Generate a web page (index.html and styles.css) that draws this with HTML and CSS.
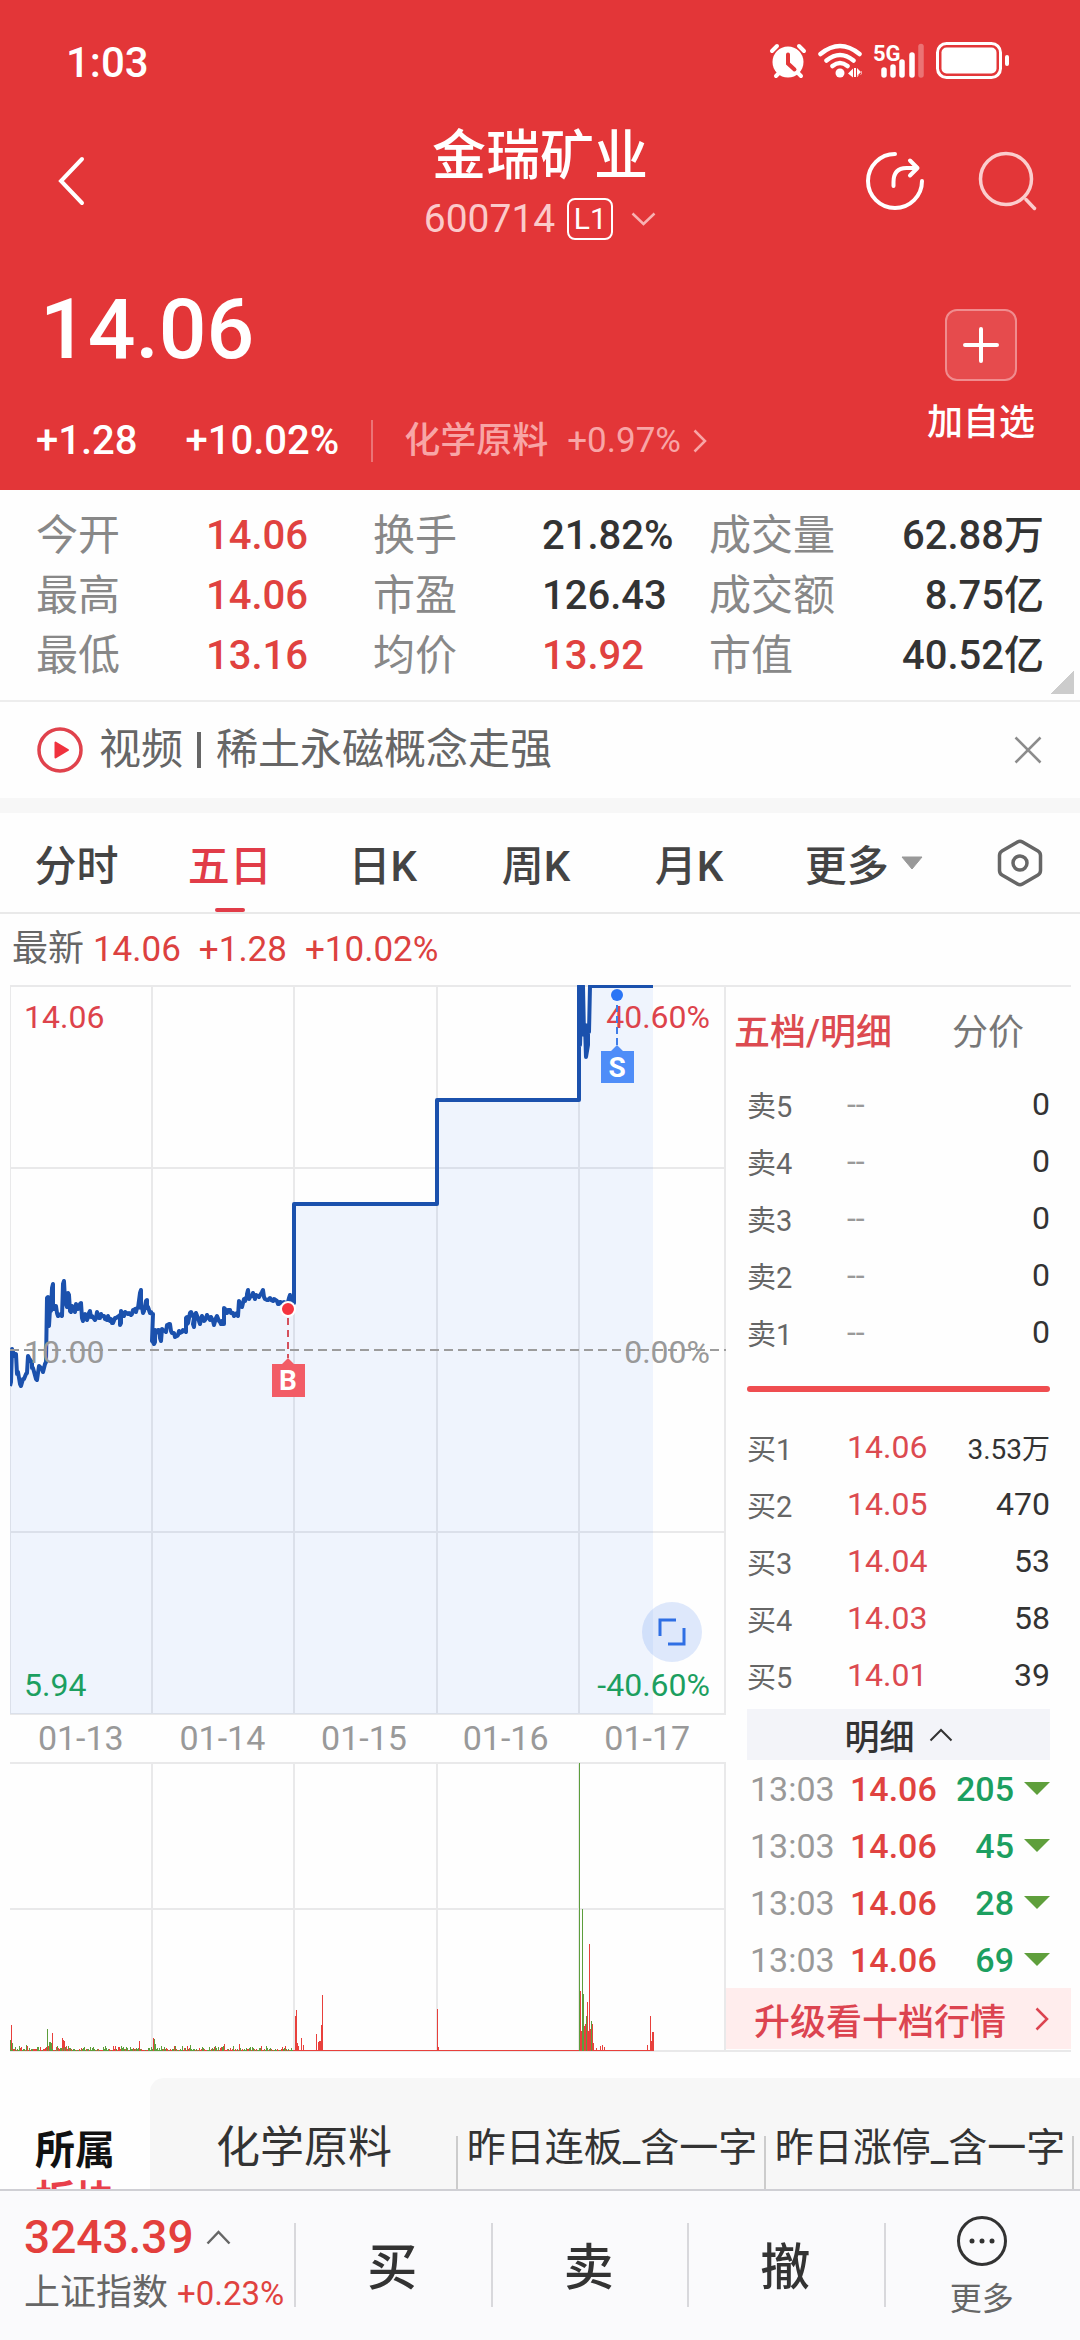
FILE: index.html
```html
<!DOCTYPE html>
<html lang="zh-CN">
<head>
    <meta charset="UTF-8">
    <meta name="viewport" content="width=device-width, initial-scale=1.0">
    <title>金瑞矿业 600714</title>
    <link rel="stylesheet" href="styles.css">
</head>
<body>
    <header class="header">
        <div class="status">
            <span class="clock">1:03</span>
            <svg class="status-icons" width="242" height="40" viewBox="768 42 242 40">
                <!-- alarm -->
                <g fill="none" stroke="#fff" stroke-width="4" stroke-linecap="round">
                    <path d="M772 51l5-5M799 46l5 5M776 76l5-5M801 76l-5-5"/>
                </g>
                <circle cx="788" cy="62" r="15.5" fill="#fff"/>
                <path d="M788 54.500v9l6.500 6" fill="none" stroke="#e33638" stroke-width="4" stroke-linecap="round"/>
                <!-- wifi -->
                <g fill="none" stroke="#fff" stroke-width="4.500" stroke-linecap="round">
                    <path d="M820.500 54q19.500-16 39 0M826.500 60.500q13.500-11 27 0M832.500 66q7.500-6 15 0"/>
                </g>
                <circle cx="840" cy="73" r="4.500" fill="#fff"/>
                <path d="M848 73.500l5-5v9zM857 68v9l5-4zM854 68h2v9h-2zM857 76l5-5v3z" fill="#fff"/>
                <!-- signal -->
                <text class="net" x="873" y="61">5G</text>
                <g stroke="#fff" stroke-width="5.500" stroke-linecap="round">
                    <path d="M884 70v5M893 67v8M902 62v13M912 55v20"/>
                    <path d="M921 46.500v28.500" opacity=".3"/>
                </g>
                <!-- battery -->
                <rect x="937.500" y="43.500" width="63" height="34" rx="9" fill="none" stroke="#fff" stroke-width="3"/>
                <rect x="941.500" y="47.500" width="55" height="26" rx="5" fill="#fff"/>
                <path d="M1007 57v7" stroke="#fff" stroke-width="4" stroke-linecap="round"/>
            </svg>
        </div>
        <nav class="nav">
            <button class="icon-btn back" aria-label="返回">
                <svg width="28" height="50" viewBox="0 0 28 50"><path d="M25 3L4 25l21 22" fill="none" stroke="#fff" stroke-width="4" stroke-linecap="round"/></svg>
            </button>
            <div class="title">
                <h1>金瑞矿业</h1>
                <button class="code">600714<span class="level">L1</span>
                    <svg width="25" height="14" viewBox="0 0 25 14"><path d="M1.500 1.500l11 10.500 11-10.500" fill="none" stroke="#f8b2b2" stroke-width="2.500"/></svg>
                </button>
            </div>
            <div class="actions">
                <button class="icon-btn" aria-label="分享">
                    <svg width="60" height="60" viewBox="0 0 60 60" fill="none" stroke="#fff" stroke-width="4" stroke-linecap="round" stroke-linejoin="round"><path d="M30 3a27 27 0 1 0 27 27M28.500 35v-4q0-14 13-14h11M45 9.500l7.500 7.500-7.500 7.500"/></svg>
                </button>
                <button class="icon-btn" aria-label="搜索">
                    <svg width="60" height="60" viewBox="0 0 60 60" fill="none" stroke="#fbcdcd" stroke-width="3.500" stroke-linecap="round"><circle cx="28" cy="28" r="25.500"/><path d="M48 48.500l8.500 9"/></svg>
                </button>
            </div>
        </nav>
        <section class="quote">
            <div>
                <div class="price">14.06</div>
                <div class="change">
                    <span class="diff">+1.28</span>
                    <span class="pct">+10.02%</span>
                    <a class="sector" href="#">化学原料 <span>+0.97%</span>
                        <svg width="14" height="24" viewBox="0 0 14 24"><path d="M1.500 1.500L12 12 1.500 22.500" fill="none" stroke="#f8a5a6" stroke-width="2.500"/></svg>
                    </a>
                </div>
            </div>
            <button class="add">
                <span class="add-box"><svg width="36" height="36" viewBox="0 0 36 36"><path d="M18 2v32M2 18h32" stroke="#fff" stroke-width="4" stroke-linecap="round"/></svg></span>
                加自选
            </button>
        </section>
    </header>

    <main class="main">
        <dl class="stats">
            <dt>今开</dt><dd class="up">14.06</dd>
            <dt>换手</dt><dd>21.82%</dd>
            <dt>成交量</dt><dd class="end">62.88万</dd>
            <dt>最高</dt><dd class="up">14.06</dd>
            <dt>市盈</dt><dd>126.43</dd>
            <dt>成交额</dt><dd class="end">8.75亿</dd>
            <dt>最低</dt><dd class="up">13.16</dd>
            <dt>均价</dt><dd class="up">13.92</dd>
            <dt>市值</dt><dd class="end">40.52亿</dd>
        </dl>

        <div class="news">
            <svg width="46" height="46" viewBox="0 0 46 46"><circle cx="23" cy="23" r="21" fill="none" stroke="#e0424c" stroke-width="3.500"/><path d="M18.500 15.500v15L31 23z" fill="#f0323e" stroke="#f0323e" stroke-width="2" stroke-linejoin="round"/></svg>
            <a class="news-link" href="#"><span>视频</span><i class="bar"></i><span>稀土永磁概念走强</span></a>
            <button class="icon-btn" aria-label="关闭">
                <svg width="28" height="28" viewBox="0 0 28 28"><path d="M1.500 1.500l25 25M26.500 1.500l-25 25" stroke="#8c8c8c" stroke-width="2.500"/></svg>
            </button>
        </div>

        <div class="tabs">
            <button>分时</button>
            <button class="active">五日</button>
            <button>日K</button>
            <button>周K</button>
            <button>月K</button>
            <button>更多<svg width="22" height="14" viewBox="0 0 22 14"><path d="M1 1h20L11 13z" fill="#999" stroke="#999" stroke-linejoin="round"/></svg></button>
            <button aria-label="设置"><svg width="46" height="48" viewBox="0 0 46 48" fill="none" stroke="#666" stroke-width="3.500" stroke-linejoin="round"><path d="M20.500 3q2.500-1.500 5 0l15.500 9q2.500 1.500 2.500 4.500v15q0 3-2.500 4.500l-15.500 9q-2.500 1.500-5 0L5 36q-2.500-1.500-2.500-4.500v-15q0-3 2.500-4.500z"/><circle cx="23" cy="24" r="7"/></svg></button>
        </div>

        <p class="latest">最新 <span>14.06</span><span>+1.28</span><span>+10.02%</span></p>

        <div class="board">
            <section class="charts">
                <div class="price-chart">
                    <svg viewBox="0 0 716 730">
                        <path class="grid" d="M0 1h716M0 183h716M0 547h716M0 729h716M0 0v730M142 0v730M284 0v730M427 0v730M569 0v730M715 0v730"/>
                        <path id="area" fill="#3d7bf0" fill-opacity=".08"/>
                        <path id="line" fill="none" stroke="#1b51ad" stroke-width="4" stroke-linejoin="round"/>
                        <path d="M0 365h716" stroke="#9c9c9c" stroke-width="2" stroke-dasharray="9 5"/>
                        <path d="M278 333v40" stroke="#d4515d" stroke-width="2" stroke-dasharray="7 5"/>
                        <circle cx="278" cy="324" r="7" fill="#f5343f" stroke="#fff" stroke-width="2"/>
                        <path d="M262 379h10l6-6 6 6h11v33h-33z" fill="#f25c66"/>
                        <text class="mark" x="278" y="405">B</text>
                    </svg>
                    <span class="label tl up">14.06</span>
                    <span class="label tr up">40.60%</span>
                    <span class="label ml">10.00</span>
                    <span class="label mr">0.00%</span>
                    <span class="label bl down">5.94</span>
                    <span class="label br down">-40.60%</span>
                    <svg class="overlay" viewBox="0 0 716 730">
                        <path d="M607 20v42" stroke="#3f7de8" stroke-width="2" stroke-dasharray="7 4"/>
                        <circle cx="607" cy="10" r="6" fill="#2a75f5"/>
                        <path d="M591 66h10l6-6 6 6h11v32h-33z" fill="#4f8df8"/>
                        <text class="mark" x="607" y="92">S</text>
                    </svg>
                    <button class="expand" aria-label="全屏">
                        <svg width="28" height="28" viewBox="0 0 28 28"><path d="M18 2H2v16M26 10v16H10" fill="none" stroke="#2f6fe4" stroke-width="3"/></svg>
                    </button>
                </div>
                <div class="dates"><span>01-13</span><span>01-14</span><span>01-15</span><span>01-16</span><span>01-17</span></div>
                <svg viewBox="0 0 716 290">
                    <path class="grid" d="M0 1h716M0 147h716M0 289h716M142 0v290M284 0v290M427 0v290M569 0v290M715 0v290"/>
                    <path id="volUp" stroke="#e8403c" stroke-width="1"/>
                    <path id="volDown" stroke="#5d9e3c" stroke-width="1"/>
                </svg>
            </section>

            <section class="depth">
                <div class="depth-tabs">
                    <button class="active">五档/明细</button>
                    <button>分价</button>
                </div>
                <table class="levels">
                    <tr><th>卖5</th><td>--</td><td>0</td></tr>
                    <tr><th>卖4</th><td>--</td><td>0</td></tr>
                    <tr><th>卖3</th><td>--</td><td>0</td></tr>
                    <tr><th>卖2</th><td>--</td><td>0</td></tr>
                    <tr><th>卖1</th><td>--</td><td>0</td></tr>
                </table>
                <div class="ratio"></div>
                <table class="levels">
                    <tr><th>买1</th><td class="up">14.06</td><td class="small">3.53万</td></tr>
                    <tr><th>买2</th><td class="up">14.05</td><td>470</td></tr>
                    <tr><th>买3</th><td class="up">14.04</td><td>53</td></tr>
                    <tr><th>买4</th><td class="up">14.03</td><td>58</td></tr>
                    <tr><th>买5</th><td class="up">14.01</td><td>39</td></tr>
                </table>
                <button class="fold">明细<svg width="24" height="14" viewBox="0 0 24 14"><path d="M1.500 12.500L12 2l10.500 10.500" fill="none" stroke="#333" stroke-width="2"/></svg></button>
                <table class="ticks">
                    <tr><th>13:03</th><td class="up">14.06</td><td class="down">205<i class="fall"></i></td></tr>
                    <tr><th>13:03</th><td class="up">14.06</td><td class="down">45<i class="fall"></i></td></tr>
                    <tr><th>13:03</th><td class="up">14.06</td><td class="down">28<i class="fall"></i></td></tr>
                    <tr><th>13:03</th><td class="up">14.06</td><td class="down">69<i class="fall"></i></td></tr>
                </table>
                <a class="upgrade" href="#">升级看十档行情<svg width="14" height="24" viewBox="0 0 14 24"><path d="M1.500 1.500L12 12 1.500 22.500" fill="none" stroke="#dc4450" stroke-width="2.500"/></svg></a>
            </section>
        </div>

        <section class="plates">
            <h2>所属<em>板块</em></h2>
            <div class="plate-list">
                <a class="first" href="#">化学原料</a>
                <a href="#">昨日连板_含一字</a>
                <a href="#">昨日涨停_含一字</a>
            </div>
        </section>
    </main>

    <footer class="footer">
        <div class="index">
            <div class="index-value">3243.39<svg width="25" height="15" viewBox="0 0 25 15"><path d="M1.500 13.500l11-11.500 11 11.500" fill="none" stroke="#666" stroke-width="2.500"/></svg></div>
            <div class="index-name">上证指数 <span>+0.23%</span></div>
        </div>
        <button class="trade">买</button>
        <button class="trade">卖</button>
        <button class="trade">撤</button>
        <button class="trade more">
            <svg width="52" height="52" viewBox="0 0 52 52"><circle cx="26" cy="26" r="23.500" fill="none" stroke="#333" stroke-width="3"/><g fill="#333"><circle cx="16" cy="26" r="2.500"/><circle cx="26" cy="26" r="2.500"/><circle cx="36" cy="26" r="2.500"/></g></svg>
            更多
        </button>
    </footer>
    <script src="chart.js"></script>
</body>
</html>
```
FILE: styles.css
```css
* {
    box-sizing: border-box;
    margin: 0;
    padding: 0;
}
body {
    display: flex;
    flex-direction: column;
    height: 100vh;
    background: #fefefe;
    color: #333;
    font-family: Roboto, "Noto Sans CJK SC", sans-serif;
}
button {
    border: none;
    background: none;
    color: inherit;
    font: inherit;
    cursor: pointer;
}
a {
    color: inherit;
    text-decoration: none;
}
svg {
    display: block;
    flex: none;
}
.up {
    color: #e0423f;
}
.down {
    color: #1c9f60;
}

/* header */
.header {
    flex: none;
    background: #e33638;
    color: #fff;
}
.status {
    display: flex;
    justify-content: space-between;
    align-items: center;
    height: 124px;
    padding: 0 70px 0 66px;
}
.clock {
    font-size: 42px;
    font-weight: 500;
}
.net {
    fill: #fff;
    font-size: 22px;
    font-weight: 700;
}
.nav {
    display: grid;
    grid-template-columns: 1fr auto 1fr;
    align-items: center;
    height: 124px;
    padding: 0 42px;
}
.icon-btn {
    justify-self: start;
    padding-bottom: 10px;
}
.back {
    padding-left: 15px;
}
.title {
    display: flex;
    flex-direction: column;
    align-items: center;
}
h1 {
    font-size: 54px;
    font-weight: 500;
    line-height: 66px;
}
.code {
    display: flex;
    align-items: center;
    color: #fbcaca;
    font-size: 39px;
    line-height: 58px;
}
.level {
    width: 46px;
    height: 42px;
    margin: 0 18px 0 12px;
    border: 2px solid #fff;
    border-radius: 8px;
    color: #fff;
    font-size: 30px;
    line-height: 38px;
}
.actions {
    display: flex;
    justify-content: flex-end;
    gap: 53px;
}
.quote {
    display: flex;
    justify-content: space-between;
    align-items: flex-start;
    padding: 32px 45px 24px 36px;
}
.price {
    font-size: 84px;
    font-weight: 500;
    line-height: 100px;
    padding-left: 4px;
}
.change {
    display: flex;
    align-items: center;
    margin-top: 36px;
    font-size: 40px;
    font-weight: 500;
    line-height: 50px;
}
.diff {
    margin-right: 48px;
}
.sector {
    display: flex;
    align-items: center;
    margin-left: 32px;
    padding-left: 31px;
    border-left: 2px solid #eb7476;
    color: #f8a5a6;
    font-size: 36px;
    line-height: 42px;
}
.sector span {
    margin: 0 12px 0 19px;
    font-size: 35px;
    font-weight: 400;
}
.add {
    display: flex;
    flex-direction: column;
    align-items: center;
    margin-top: 29px;
    font-size: 36px;
    font-weight: 500;
    line-height: 44px;
}
.add-box {
    display: flex;
    align-items: center;
    justify-content: center;
    width: 72px;
    height: 72px;
    margin-bottom: 20px;
    border: 2px solid #f08c8e;
    border-radius: 12px;
    background: #e64b4d;
}

/* stats */
.main {
    flex: 1;
    min-height: 0;
    overflow: hidden;
}
.stats {
    display: grid;
    grid-template-columns: 170fr 167fr 169fr 167fr 150fr 185fr;
    align-content: start;
    height: 212px;
    padding: 16px 36px 0;
    border-bottom: 2px solid #ededed;
    background: linear-gradient(135deg, transparent 50%, #ccc 50%) no-repeat right 6px bottom 6px / 24px 24px;
    font-size: 40px;
    line-height: 60px;
    font-weight: 500;
}
.stats dt {
    color: #888;
    font-size: 42px;
    font-weight: 400;
    white-space: nowrap;
}
.stats dd {
    height: 60px;
}
.stats .end {
    text-align: right;
}
.news {
    display: flex;
    align-items: center;
    height: 111px;
    padding: 0 38px 0 37px;
    border-bottom: 15px solid #f7f7f7;
    color: #666;
    font-size: 42px;
}
.news-link {
    display: flex;
    flex: 1;
    align-items: center;
    margin-left: 16px;
    line-height: 60px;
}
.bar {
    width: 4px;
    height: 36px;
    margin: 0 15px 0 14px;
    background: #666;
}
.news .icon-btn {
    padding: 0;
}

/* period tabs */
.tabs {
    display: grid;
    grid-template-columns: repeat(5, 153fr) 196fr 116fr;
    height: 101px;
    padding-right: 2px;
    border-bottom: 2px solid #e9e9e9;
    color: #444;
    font-size: 42px;
}
.tabs button {
    display: flex;
    align-items: center;
    justify-content: center;
    gap: 12px;
    font-weight: 500;
}
.tabs .active {
    position: relative;
    color: #e13c48;
}
.tabs .active::after {
    content: "";
    position: absolute;
    bottom: 0;
    width: 30px;
    height: 4px;
    border-radius: 2px;
    background: #e13c48;
}
.latest {
    padding-left: 12px;
    color: #666;
    font-size: 36px;
    line-height: 70px;
}
.latest span {
    margin-right: 18px;
    color: #dc413f;
    font-size: 35px;
}

/* charts */
.board {
    display: grid;
    grid-template-columns: 716fr 345fr;
    margin: 0 9px 0 10px;
}
.charts svg {
    width: 100%;
}
.grid {
    fill: none;
    stroke: #e9e9ea;
    stroke-width: 2;
}
.price-chart {
    position: relative;
}
.overlay {
    position: absolute;
    inset: 0;
}
.mark {
    fill: #fff;
    font-size: 28px;
    font-weight: 700;
    text-anchor: middle;
}
.label {
    position: absolute;
    color: #999;
    font-size: 32px;
    line-height: 40px;
}
.label.up {
    color: #dd434b;
}
.label.down {
    color: #1c9f60;
}
.tl, .tr {
    top: 12px;
}
.ml, .mr {
    top: 50%;
    margin-top: -18px;
}
.bl, .br {
    bottom: 10px;
}
.tl, .ml, .bl {
    left: 14px;
}
.tr, .mr, .br {
    right: 16px;
}
.expand {
    position: absolute;
    right: 24px;
    bottom: 53px;
    width: 60px;
    height: 60px;
    padding: 16px;
    border-radius: 50%;
    background: rgba(64, 124, 240, .17);
}
.charts .expand svg {
    width: 28px;
}
.dates {
    display: grid;
    grid-template-columns: repeat(5, 142fr) 8fr;
    color: #999;
    font-size: 34px;
    line-height: 47px;
    text-align: center;
}

/* order book */
.depth {
    border-top: 2px solid #e9e9ea;
    border-bottom: 2px solid #e9e9ea;
}
.depth-tabs {
    display: flex;
    gap: 60px;
    height: 88px;
    padding: 0 0 5px 8px;
    color: #777;
    font-size: 36px;
}
.depth-tabs .active {
    color: #dc4a50;
    font-weight: 500;
}
table {
    width: calc(100% - 42px);
    margin: 0 21px;
    border-collapse: collapse;
    table-layout: fixed;
}
tr {
    height: 57px;
}
th {
    text-align: left;
    font-weight: 400;
}
.levels th {
    width: 100px;
    color: #666;
    font-size: 29px;
}
.levels td {
    color: #999;
    font-size: 32px;
}
.levels td.up {
    color: #dc4a50;
}
.levels td:last-child {
    color: #333;
    text-align: right;
}
.levels td.small {
    font-size: 28px;
}
.ratio {
    height: 6px;
    margin: 26px 21px;
    border-radius: 3px;
    background: #ef4d50;
}
.fold {
    display: flex;
    align-items: center;
    justify-content: center;
    gap: 14px;
    width: calc(100% - 42px);
    height: 51px;
    margin: 6px 21px 0;
    background: #f3f4f9;
    font-size: 35px;
    font-weight: 500;
}
.ticks {
    font-size: 34px;
    font-weight: 500;
}
.ticks th {
    width: 103px;
    padding-left: 3px;
    color: #999;
}
.ticks td.up {
    width: 86px;
}
.ticks td:last-child {
    text-align: right;
}
.fall {
    display: inline-block;
    margin-left: 10px;
    border: 13px solid transparent;
    border-top-color: #5f9f3c;
    border-bottom: none;
    vertical-align: 6px;
}
.upgrade {
    display: flex;
    align-items: center;
    justify-content: space-between;
    height: 61px;
    padding: 0 22px 0 28px;
    background: #ffeded;
    color: #dc4450;
    font-size: 36px;
    font-weight: 500;
}

/* plates */
.plates {
    display: flex;
    margin-top: 26px;
}
h2 {
    flex: none;
    width: 150px;
    padding: 48px 0 0 35px;
    color: #111;
    font-size: 40px;
    line-height: 50px;
}
h2 em {
    display: block;
    color: #e8404a;
    font-style: normal;
}
.plate-list {
    display: flex;
    flex: 1;
    height: 160px;
    border-radius: 14px 0 0 0;
    background: #f7f7f7;
    overflow: hidden;
}
.plate-list a {
    position: relative;
    flex: none;
    width: 308px;
    padding-top: 40px;
    font-size: 39px;
    line-height: 60px;
    text-align: center;
    white-space: nowrap;
}
.plate-list a::after {
    content: "";
    position: absolute;
    top: 58px;
    right: 0;
    bottom: 0;
    width: 2px;
    background: #ccc;
}
.plate-list .first {
    font-size: 44px;
}

/* footer */
.footer {
    display: flex;
    flex: none;
    height: 151px;
    border-top: 2px solid #cfcfd4;
    background: #fafafc;
}
.index {
    width: 294px;
    padding: 18px 0 0 24px;
    white-space: nowrap;
}
.index-value {
    display: flex;
    align-items: center;
    gap: 12px;
    color: #e33f3c;
    font-size: 46px;
    font-weight: 500;
    line-height: 56px;
}
.index-name {
    color: #666;
    font-size: 36px;
    line-height: 56px;
}
.index-name span {
    color: #e0423f;
    font-size: 33px;
}
.trade {
    position: relative;
    flex: 1;
    padding-bottom: 6px;
    font-size: 50px;
    font-weight: 500;
}
.trade::before {
    content: "";
    position: absolute;
    top: 32px;
    left: 0;
    width: 2px;
    height: 84px;
    background: #d8d8dc;
}
.more {
    display: flex;
    flex-direction: column;
    align-items: center;
    padding-top: 24px;
    color: #666;
    font-size: 32px;
    font-weight: 400;
    line-height: 64px;
}
```
FILE: chart.js
```javascript
// five-day price trace, x / y inside the 716 x 730 chart
const trace = [
    [0, 401], [2, 364], [5, 371], [7, 389], [10, 399], [13, 394], [16, 389], [18, 371], [21, 376], [22, 383],
    [26, 394], [29, 381], [32, 384], [35, 379], [37, 313], [38, 339], [40, 324], [42, 303], [43, 323], [45, 321],
    [47, 328], [51, 329], [53, 299], [55, 316], [56, 319], [58, 308], [60, 326], [62, 321], [64, 324], [66, 319],
    [68, 324], [70, 319], [72, 333], [74, 330], [77, 335], [79, 328], [81, 332], [85, 335], [87, 327], [89, 333],
    [91, 329], [94, 331], [97, 335], [100, 336], [102, 338], [105, 333], [109, 331], [110, 340], [111, 326], [114, 331],
    [118, 329], [121, 330], [123, 325], [125, 324], [127, 323], [130, 308], [131, 323], [133, 328], [136, 316], [137, 323],
    [140, 328], [142, 329], [142, 356], [144, 359], [145, 345], [148, 345], [150, 353], [152, 344], [155, 346], [157, 340],
    [159, 339], [161, 346], [164, 348], [167, 351], [169, 346], [172, 347], [175, 346], [176, 333], [177, 339], [180, 328],
    [183, 331], [183, 339], [185, 331], [189, 336], [191, 334], [194, 336], [196, 333], [200, 335], [203, 336], [206, 333],
    [209, 336], [211, 339], [213, 339], [214, 323], [217, 328], [220, 325], [223, 328], [227, 328], [229, 316], [231, 319],
    [234, 314], [236, 313], [237, 309], [239, 314], [242, 311], [245, 314], [248, 311], [252, 307], [254, 312], [257, 315],
    [260, 313], [263, 316], [267, 316], [269, 319], [273, 318], [276, 318], [279, 313], [281, 316], [284, 318],
    [284, 219], [427, 219], [427, 115], [569, 115], [569, 1], [570, 60], [572, 1], [573, 1], [574, 50], [575, 40],
    [576, 72], [578, 60], [578, 40], [579, 47], [580, 1], [643, 1]
];

let seed = 7;
function random() {
    seed = (seed * 16807) % 2147483647;
    return seed / 2147483647;
}

// minute-to-minute wobble on the two open trading days
let d = '';
trace.forEach(([x, y], i) => {
    d += (i ? 'L' : 'M') + x + ' ' + y;
    if (x < 282) {
        d += 'L' + (x + 1) + ' ' + (y + Math.round(random() * 8 - 4));
    }
});
document.getElementById('line').setAttribute('d', d);
document.getElementById('area').setAttribute('d', d + 'V729H0Z');

// [x, height, falling]
const spikes = [
    [0, 11, 1], [1, 26, 0], [2, 8, 1], [37, 22, 1], [39, 9, 1], [40, 9, 1], [41, 8, 1], [42, 18, 0], [52, 13, 0],
    [53, 11, 0], [54, 10, 0], [129, 10, 0], [143, 13, 0], [144, 12, 1], [145, 7, 1], [177, 5, 0], [214, 7, 0],
    [229, 7, 0], [251, 5, 0], [285, 35, 0], [286, 41, 0], [287, 8, 0], [288, 5, 0], [291, 13, 0], [293, 6, 0],
    [306, 17, 0], [308, 9, 0], [309, 10, 0], [310, 10, 0], [311, 26, 0], [312, 56, 0], [427, 42, 0], [428, 4, 0],
    [569, 288, 1], [570, 60, 0], [571, 20, 0], [572, 142, 1], [573, 57, 1], [574, 25, 0], [575, 27, 0], [576, 35, 1],
    [577, 49, 0], [578, 20, 0], [579, 107, 0], [580, 22, 0], [581, 30, 1], [582, 27, 0], [583, 8, 0], [586, 3, 0],
    [590, 5, 0], [592, 6, 0], [594, 4, 0], [637, 6, 0], [640, 35, 0], [641, 10, 0], [642, 19, 0], [643, 19, 0]
];
for (let x = 0; x < 643; x++) {
    const open = x < 284;
    const height = open ? 1 + Math.round(random() * random() * 5) : 1;
    spikes.push([x, height, open && random() > .5]);
}
const bars = falling => spikes
    .filter(s => Boolean(s[2]) === falling)
    .map(([x, h]) => 'M' + (x + .5) + ' 289v-' + h)
    .join('');
document.getElementById('volUp').setAttribute('d', bars(false));
document.getElementById('volDown').setAttribute('d', bars(true));
```
